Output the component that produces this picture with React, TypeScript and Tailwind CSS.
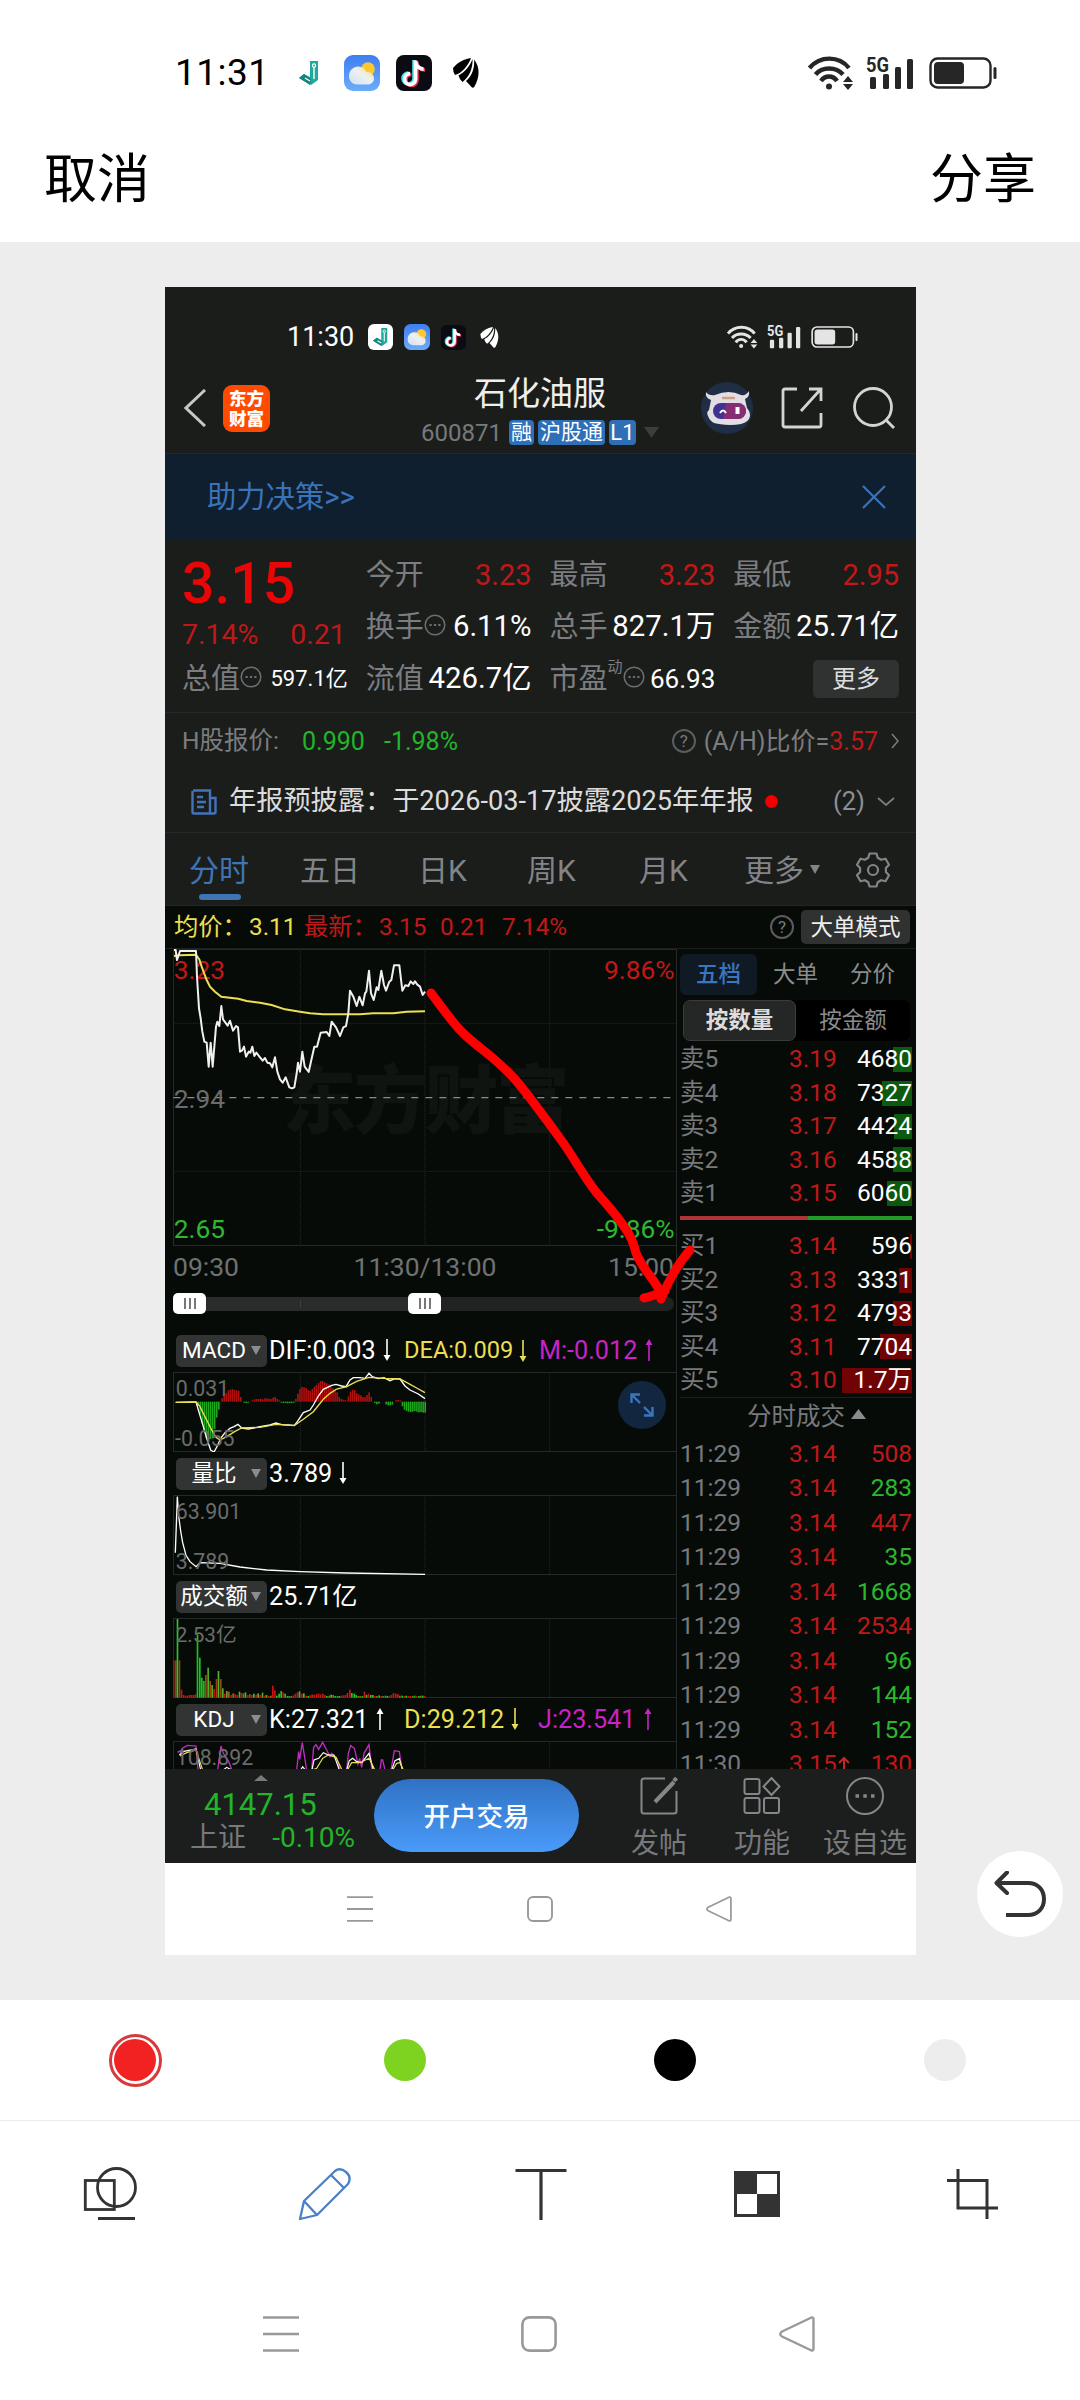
import React from 'react';

interface QuoteRow {
    label: string;
    price: string;
    volume: string;
    bar: number;
}

const SELL_ROWS: QuoteRow[] = [
    { label: '卖5', price: '3.19', volume: '4680', bar: 19 },
    { label: '卖4', price: '3.18', volume: '7327', bar: 30 },
    { label: '卖3', price: '3.17', volume: '4424', bar: 18 },
    { label: '卖2', price: '3.16', volume: '4588', bar: 19 },
    { label: '卖1', price: '3.15', volume: '6060', bar: 25 },
];

const BUY_ROWS: QuoteRow[] = [
    { label: '买1', price: '3.14', volume: '596', bar: 2 },
    { label: '买2', price: '3.13', volume: '3331', bar: 13 },
    { label: '买3', price: '3.12', volume: '4793', bar: 19 },
    { label: '买4', price: '3.11', volume: '7704', bar: 32 },
    { label: '买5', price: '3.10', volume: '1.7万', bar: 70 },
];

const TRADES = [
    { time: '11:29', price: '3.14', volume: '508', up: true },
    { time: '11:29', price: '3.14', volume: '283', up: false },
    { time: '11:29', price: '3.14', volume: '447', up: true },
    { time: '11:29', price: '3.14', volume: '35', up: false },
    { time: '11:29', price: '3.14', volume: '1668', up: false },
    { time: '11:29', price: '3.14', volume: '2534', up: true },
    { time: '11:29', price: '3.14', volume: '96', up: false },
    { time: '11:29', price: '3.14', volume: '144', up: false },
    { time: '11:29', price: '3.14', volume: '152', up: false },
    { time: '11:30', price: '3.15', volume: '130', up: true },
];

// Chart series use a 3x grid so the minute points land on sub-pixels.
const PRICE_LINE = '42,150 47,150 51,180 60,153 108,153 111,230 117,325 122,355 127,395 133,425 140,428 146,500 152,428 158,500 163,440 168,380 172,365 178,378 184,318 189,358 203,377 210,362 219,392 228,378 234,382 240,455 246,452 252,440 258,470 266,455 271,458 277,440 283,468 289,458 300,472 308,482 315,474 322,488 330,490 337,502 345,472 352,515 360,538 368,548 377,532 388,562 396,565 403,562 410,520 414,488 420,515 427,455 434,500 446,516 454,480 463,440 471,440 482,398 500,396 508,408 515,365 528,382 540,408 550,382 558,378 565,340 570,272 580,290 590,318 598,290 608,316 615,280 619,275 627,212 633,280 641,300 650,262 655,270 664,212 672,255 678,272 688,245 694,240 702,196 718,196 727,272 736,256 745,258 752,244 760,252 765,244 772,254 780,260 788,285 795,275';
const AVERAGE_LINE = '42,168 60,166 108,164 118,178 125,200 140,240 150,260 165,275 184,290 235,296 260,303 300,308 335,315 375,328 420,335 450,340 490,343 600,343 640,340 700,340 740,335 795,334';
const DIF_LINE = '47,277 108,276 118,310 130,350 140,385 152,420 162,426 172,408 182,385 195,368 210,355 222,350 234,343 245,354 265,357 300,350 330,345 348,339 365,344 385,345 403,346 412,335 430,308 450,300 460,285 475,258 490,238 515,226 528,223 545,228 558,230 570,210 580,203 600,203 615,205 627,190 637,200 655,206 672,203 690,212 705,206 720,207 735,228 750,240 775,252 795,266';
const DEA_LINE = '47,277 108,276 120,290 140,330 155,360 168,382 180,390 200,380 225,364 245,354 300,352 348,343 403,347 430,328 460,305 490,268 510,250 530,237 560,230 590,214 627,202 670,205 720,207 745,220 770,234 795,248';

const MACD_BARS: { start: number; up: boolean; values: number[] }[] = [
    { start: 112, up: false, values: [12, 38, 65, 92, 108, 118, 112, 110, 82, 48, 24] },
    { start: 184, up: true, values: [10, 22, 26, 34, 36, 38, 35, 34, 33, 14] },
    { start: 250, up: false, values: [3, 4, 3] },
    { start: 275, up: true, values: [4, 7, 8, 8, 9, 7, 10, 10, 9, 8, 12, 14, 8, 4] },
    { start: 362, up: false, values: [3, 4, 4, 5, 4, 4, 3] },
    { start: 405, up: true, values: [8, 24, 38, 44, 43, 41, 35, 32, 38, 45, 50, 56, 62, 62, 58, 55, 52, 45, 40, 35, 28, 14, 8, 6, 5] },
    { start: 563, up: true, values: [16, 30, 36, 35, 26, 22, 19, 14, 13, 20, 28, 14] },
    { start: 642, up: false, values: [4, 8, 6] },
    { start: 676, up: false, values: [8, 11, 11, 9] },
    { start: 706, up: true, values: [4, 5, 4] },
    { start: 725, up: false, values: [14, 24, 28, 30, 31, 30, 28, 30, 32, 31, 33, 33] },
];

const VOLUME_BARS: [number, number, string][] = [
    [39, 112, '#8c1f0b'], [45, 112, '#7a4a10'], [50, 236, '#2fc42b'], [56, 112, '#6d5512'], [62, 24, '#c41512'],
    [68, 8, '#c41512'], [74, 6, '#c41512'], [80, 6, '#c41512'], [86, 8, '#c41512'], [92, 8, '#c41512'], [98, 8, '#c41512'], [104, 10, '#c41512'],
    [110, 190, '#14c81a'], [117, 120, '#14c81a'], [123, 60, '#14c81a'], [129, 50, '#3cae1c'], [135, 68, '#9c4a12'], [142, 90, '#4fae26'],
    [148, 50, '#9c4a12'], [154, 38, '#4fae26'], [160, 26, '#c41512'], [167, 56, '#9c3a12'], [173, 80, '#55b02a'], [180, 56, '#8a4a12'], [186, 28, '#4fae26'],
    [192, 12, '#c41512'], [198, 20, '#6b9b24'], [204, 18, '#8a6a18'], [211, 8, '#c41512'], [217, 13, '#8a6a18'], [223, 11, '#c41512'], [229, 8, '#c41512'],
    [236, 18, '#55b02a'], [242, 14, '#c41512'], [248, 13, '#8a6a18'], [254, 16, '#55b02a'], [261, 8, '#c41512'], [267, 11, '#8a4a12'], [273, 8, '#c41512'],
    [279, 12, '#55b02a'], [286, 9, '#c41512'], [292, 13, '#55b02a'], [298, 8, '#c41512'], [305, 15, '#55b02a'], [311, 6, '#c41512'], [317, 8, '#55b02a'], [324, 5, '#c41512'],
    [330, 6, '#8a6a18'], [336, 36, '#c41512'], [342, 22, '#c41512'], [348, 6, '#55b02a'], [355, 12, '#14c81a'], [361, 20, '#14c81a'], [367, 16, '#c41512'], [373, 12, '#6b9b24'],
    [380, 5, '#14c81a'], [386, 5, '#14c81a'], [392, 5, '#8a6a18'], [398, 7, '#c41512'], [404, 12, '#c41512'], [410, 16, '#c41512'], [416, 19, '#55b02a'], [423, 12, '#c41512'], [429, 13, '#55b02a'],
    [436, 6, '#c41512'], [442, 5, '#14c81a'], [448, 7, '#c41512'], [454, 10, '#c41512'], [460, 8, '#c41512'], [467, 11, '#c41512'], [473, 12, '#c41512'], [479, 10, '#c41512'], [486, 12, '#c41512'],
    [492, 8, '#c41512'], [498, 5, '#14c81a'], [505, 6, '#8a6a18'], [511, 9, '#55b02a'], [517, 8, '#8a6a18'], [523, 5, '#14c81a'], [530, 5, '#14c81a'], [536, 5, '#14c81a'], [542, 6, '#c41512'], [548, 7, '#c41512'],
    [554, 8, '#c41512'], [560, 14, '#c41512'], [567, 24, '#c41512'], [573, 14, '#14c81a'], [580, 12, '#14c81a'], [586, 8, '#14c81a'], [592, 5, '#8a6a18'], [598, 5, '#8a6a18'], [605, 5, '#14c81a'],
    [611, 18, '#c41512'], [617, 8, '#55b02a'], [623, 12, '#c41512'], [630, 8, '#55b02a'], [636, 8, '#14c81a'], [642, 5, '#c41512'], [648, 5, '#8a6a18'], [655, 7, '#14c81a'], [661, 5, '#c41512'], [667, 5, '#8a6a18'],
    [674, 6, '#14c81a'], [680, 5, '#14c81a'], [686, 6, '#c41512'], [692, 8, '#c41512'], [698, 14, '#c41512'], [705, 12, '#c41512'], [711, 11, '#c41512'], [717, 6, '#8a6a18'], [724, 6, '#14c81a'], [730, 5, '#c41512'],
    [736, 6, '#14c81a'], [742, 5, '#c41512'], [748, 5, '#c41512'], [755, 5, '#8a6a18'], [761, 6, '#14c81a'], [767, 5, '#c41512'], [774, 5, '#14c81a'], [780, 6, '#8a6a18'], [786, 6, '#14c81a'], [792, 5, '#c41512'],
];

const WeatherIcon: React.FC<{ className: string }> = ({ className }) => (
    <svg viewBox="0 0 36 36" className={className}>
        <defs>
            <linearGradient id="sky" x1="0" y1="0" x2="0" y2="1">
                <stop offset="0" stopColor="#3f7ef0" />
                <stop offset="1" stopColor="#6cacfa" />
            </linearGradient>
            <linearGradient id="cloud" x1="1" y1="0" x2="0" y2="1">
                <stop offset="0" stopColor="#f5d878" />
                <stop offset=".45" stopColor="#eef1f0" />
                <stop offset="1" stopColor="#cfe0f5" />
            </linearGradient>
        </defs>
        <rect width="36" height="36" rx="9" fill="url(#sky)" />
        <circle cx="24" cy="14" r="6.8" fill="#fdc82f" />
        <path d="M13 29.500a8 8 0 0 1-8-8.500c0-6 5-9.500 9-9.500 5 0 7 3 8.500 5.500 4 0 7.500 2 7.500 6.500 0 3.500-3 6-6 6z" fill="url(#cloud)" />
    </svg>
);

const TikTokIcon: React.FC<{ className: string }> = ({ className }) => (
    <svg viewBox="0 0 36 36" className={className}>
        <rect width="36" height="36" rx="8" fill="#0b0b14" />
        <g fill="none" strokeWidth="3.6">
            <path d="M18 5v18.500a5.500 5.500 0 1 1-5.500-5.500M18 6a8 8 0 0 0 8 7.500" stroke="#42e8e4" transform="translate(0 0)" />
            <path d="M18 5v18.500a5.500 5.500 0 1 1-5.500-5.500M18 6a8 8 0 0 0 8 7.500" stroke="#f5325c" transform="translate(3 1.500)" />
            <path d="M18 5v18.500a5.500 5.500 0 1 1-5.500-5.500M18 6a8 8 0 0 0 8 7.500" stroke="#fff" transform="translate(1.600 .6)" />
        </g>
    </svg>
);

const HookIcon: React.FC<{ className: string }> = ({ className }) => (
    <svg viewBox="0 0 20 24" className={className} fill="none" strokeLinejoin="round">
        <path d="M11 0h8v19l-7 5L0 17l5-4 6 3z" fill="#1fa99f" />
        <path d="M5 13l7 5-1 6L0 17z" fill="#14857e" />
        <circle cx="15" cy="4.500" r="1.600" stroke="#fff" strokeWidth="1.200" />
        <path d="M15 6v12M6 17l5 3" stroke="#fff" strokeWidth="1.400" />
    </svg>
);

const FeatherIcon: React.FC<{ className: string }> = ({ className }) => (
    <svg viewBox="0 0 26 30" className={className} fill="currentColor">
        <path d="M18 0C11 1 5 4 0 10q0 4 2 7C9 15 15 8 18 0z" />
        <path d="M19.500 1C17 8 12 14 5.500 17.500q1 4 4 6.500C16 19 20 11 19.500 1z" />
        <path d="M21 1.500C22 11 18 19 13 23l6 6.500q2 .5 2.500-1C26.500 20 27.500 9 21 1.500z" />
    </svg>
);

const WifiIcon: React.FC<{ className: string }> = ({ className }) => (
    <svg viewBox="0 0 46 34" className={className} fill="none" stroke="currentColor" strokeWidth="4.4">
        <path d="M1.500 12C12-.5 31-.5 41 12" />
        <path d="M7.500 18.500C14 10.500 28 10.500 35 18.500" />
        <path d="M13 25c4-6 12-6 16 0" />
        <circle cx="21" cy="30.500" r="3" fill="currentColor" stroke="none" />
        <path d="M40 20l5 6H35zM40 34l5-6H35z" fill="currentColor" stroke="none" />
    </svg>
);

const SignalIcon: React.FC<{ className: string }> = ({ className }) => (
    <svg viewBox="0 0 48 34" className={`overflow-visible ${className}`} fill="currentColor">
        <text x="0" y="15.500" fontSize="20" fontWeight="700" textLength="23" lengthAdjust="spacingAndGlyphs">5G</text>
        <rect x="4" y="21" width="6" height="12" rx="1.5" />
        <rect x="17" y="18" width="6" height="15" rx="1.5" />
        <rect x="29" y="11" width="6" height="22" rx="1.5" />
        <rect x="41" y="3" width="6" height="30" rx="1.5" />
    </svg>
);

const BatteryIcon: React.FC<{ className: string }> = ({ className }) => (
    <svg viewBox="0 0 68 32" className={className}>
        <rect x="1.5" y="1.5" width="60" height="29" rx="7" fill="none" stroke="currentColor" strokeWidth="2.4" />
        <rect x="5" y="5" width="30" height="22" rx="4" fill="currentColor" />
        <rect x="64.5" y="10" width="3" height="12" rx="1.5" fill="currentColor" />
    </svg>
);

const DotsIcon: React.FC = () => (
    <svg viewBox="0 0 22 22" className="h-[22px] w-[22px] shrink-0 fill-none stroke-[#6c6e71]" strokeWidth="1.5">
        <circle cx="11" cy="11" r="9.8" />
        <path d="M5.500 11h2.200M9.900 11h2.200M14.300 11h2.200" strokeWidth="2" />
    </svg>
);

const HelpIcon: React.FC = () => (
    <span className="flex h-[24px] w-[24px] items-center justify-center rounded-full border-2 border-[#5a5c5e] text-[17px] leading-none text-[#77797b]">?</span>
);

const ArrowIcon: React.FC<{ up?: boolean }> = ({ up }) => (
    <svg viewBox="0 0 8 22" className={`h-[22px] w-[8px] shrink-0 ${up ? 'rotate-180' : ''}`}>
        <path d="M4 0v18" stroke="currentColor" strokeWidth="1.6" />
        <path d="M.5 16h7L4 22z" fill="currentColor" />
    </svg>
);

const SystemNav: React.FC<{ className: string; iconClass: string }> = ({ className, iconClass }) => (
    <div className={`flex items-center text-[#999] ${className}`}>
        <svg viewBox="0 0 36 36" className={iconClass} fill="none" stroke="currentColor" strokeWidth="2.6">
            <path d="M0 1.500h36M0 18h36M0 34.500h36" />
        </svg>
        <svg viewBox="0 0 36 36" className={iconClass} fill="none" stroke="currentColor" strokeWidth="2.6">
            <rect x="1.4" y="1.4" width="33.2" height="33.2" rx="7" />
        </svg>
        <svg viewBox="0 0 36 36" className={iconClass} fill="none" stroke="currentColor" strokeWidth="2.4" strokeLinejoin="round">
            <path d="M32.500 1.500L3 15.500q-3.500 2.500 0 5L32.500 34.500q2 .5 2-2V3.500q0-2.500-2-2z" />
        </svg>
    </div>
);

const OuterHeader: React.FC = () => (
    <header className="h-[242px] bg-white text-black">
        <div className="flex h-[145px] items-center pl-[175px] pr-[83px]">
            <span className="w-[124px] text-[37px] leading-none tracking-[.5px]">11:31</span>
            <HookIcon className="h-[24px] w-[20px]" />
            <WeatherIcon className="ml-[25px] h-[36px] w-[36px]" />
            <TikTokIcon className="ml-[16px] h-[36px] w-[36px]" />
            <FeatherIcon className="ml-[21px] h-[30px] w-[26px]" />
            <div className="ml-auto flex items-center text-[#262626]">
                <WifiIcon className="h-[34px] w-[46px]" />
                <SignalIcon className="ml-[12px] h-[34px] w-[48px]" />
                <BatteryIcon className="ml-[15px] h-[32px] w-[68px]" />
            </div>
        </div>
        <div className="flex h-[71px] items-center justify-between px-[44px] text-[53px] leading-none">
            <span>取消</span>
            <span>分享</span>
        </div>
    </header>
);

const InnerStatusBar: React.FC = () => (
    <div className="flex h-[100px] items-center pl-[122px] pr-[58px] text-white">
        <span className="w-[81px] text-[27px] leading-none">11:30</span>
        <span className="flex h-[26px] w-[25px] items-center justify-center rounded-[6px] bg-white">
            <HookIcon className="h-[18px] w-[15px]" />
        </span>
        <WeatherIcon className="ml-[11px] h-[26px] w-[26px]" />
        <TikTokIcon className="ml-[11px] h-[25px] w-[25px]" />
        <FeatherIcon className="ml-[14px] h-[21px] w-[19px]" />
        <div className="ml-auto flex items-center text-[#e4e4e4]">
            <WifiIcon className="h-[24px] w-[31px]" />
            <SignalIcon className="ml-[9px] h-[24px] w-[34px]" />
            <BatteryIcon className="ml-[10px] h-[22px] w-[47px]" />
        </div>
    </div>
);

const StockHeader: React.FC = () => (
    <div className="flex h-[67px] items-start border-b border-[#262827]">
        <svg viewBox="0 0 22 38" className="ml-[19px] mt-[2px] h-[38px] w-[22px] fill-none stroke-[#c8c8c8]" strokeWidth="3">
            <path d="M21 1L2 19l19 18" />
        </svg>
        <div className="-mt-[2px] ml-[17px] flex h-[47px] w-[47px] flex-col items-center justify-center rounded-[9px] bg-[#ff4a00] text-[17.5px] font-black leading-[20px] text-white">
            <span>东方</span>
            <span>财富</span>
        </div>
        <div className="-mt-[11px] ml-[146px] flex w-[248px] flex-col items-center">
            <div className="text-[33px] leading-[36px] text-[#eee]">石化油服</div>
            <div className="mt-[8px] flex h-[25px] w-full items-center justify-center text-[21px] leading-none">
                <span className="text-[24px] text-[#77797c]">600871</span>
                <span className="ml-[7px] flex h-[25px] w-[25px] items-center justify-center rounded-[4px] bg-[#2f6fb8] text-white">融</span>
                <span className="ml-[4px] flex h-[25px] w-[67px] items-center justify-center rounded-[4px] bg-[#2f6fb8] text-white">沪股通</span>
                <span className="ml-[4px] flex h-[25px] w-[27px] items-center justify-center rounded-[4px] bg-[#2f6fb8] text-[22px] text-white">L1</span>
                <svg viewBox="0 0 15 11" className="ml-[8px] h-[11px] w-[15px] shrink-0 fill-[#3c3e3e]"><path d="M0 0h15L7.500 11z" /></svg>
            </div>
        </div>
        <svg viewBox="0 0 52 52" className="-mt-[5px] ml-[37px] h-[52px] w-[52px]">
            <circle cx="26" cy="26" r="26" fill="#1f2d45" />
            <path d="M5 10q-1 6 5 8l-2 10q-3 2-1 6 2 7 11 8 12 2 22 0 8-2 9-8 0-5-3-8l-2-9q5-2 4-8-3 5-8 4Q28 7 14 13 8 14 5 10z" fill="#e2dee4" />
            <rect x="12" y="21" width="33" height="16" rx="8" fill="#3f3290" />
            <path d="M25 21h12a8 8 0 0 1 0 16H22z" fill="#a02c6a" opacity=".75" />
            <path d="M19 31q3-5 6 0" stroke="#fff" strokeWidth="2" fill="none" />
            <path d="M36.500 25v7" stroke="#fff" strokeWidth="4" />
            <path d="M21 16h13" stroke="#c9a184" strokeWidth="2.5" />
        </svg>
        <svg viewBox="0 0 42 42" className="ml-[28px] h-[42px] w-[42px] fill-none stroke-[#d4d4d4]" strokeWidth="2.8">
            <path d="M16 2H4q-2 0-2 2v34q0 2 2 2h34q2 0 2-2V26" />
            <path d="M28 2h12v12M39 3L20 24" />
        </svg>
        <svg viewBox="0 0 42 42" className="ml-[30px] h-[42px] w-[42px] fill-none stroke-[#d4d4d4]" strokeWidth="2.8">
            <circle cx="20" cy="20" r="18.5" />
            <path d="M33 33l8 8" />
        </svg>
    </div>
);

const Stat: React.FC<{ label: string; value: string; valueClass: string; dots?: boolean; sup?: string }> = ({ label, value, valueClass, dots, sup }) => (
    <div className="flex items-center justify-between whitespace-nowrap leading-none">
        <span className="flex items-center text-[29px] text-[#7b7d80]">
            {label}
            {sup && <span className="-mt-[24px] text-[15px]">{sup}</span>}
            {dots && <span className="-mt-[4px]"><DotsIcon /></span>}
        </span>
        <span className={valueClass}>{value}</span>
    </div>
);

const StatsPanel: React.FC = () => (
    <div className="grid h-[174px] grid-cols-4 grid-rows-[52px_52px_52px] gap-x-[18px] border-b border-[#262827] px-[17px] pt-[10px]">
        <div className="row-span-2">
            <div className="flex h-[68px] items-center text-[57px] font-medium leading-none text-[#e80606]">3.15</div>
            <div className="flex h-[37px] items-center justify-between pr-[2px] text-[28.5px] leading-none text-[#c01818]">
                <span>7.14%</span>
                <span>0.21</span>
            </div>
        </div>
        <Stat label="今开" value="3.23" valueClass="text-[29px] text-[#c01818]" />
        <Stat label="最高" value="3.23" valueClass="text-[29px] text-[#c01818]" />
        <Stat label="最低" value="2.95" valueClass="text-[29px] text-[#c01818]" />
        <Stat label="换手" value="6.11%" valueClass="text-[29.3px] text-white" dots />
        <Stat label="总手" value="827.1万" valueClass="text-[29.3px] text-white" />
        <Stat label="金额" value="25.71亿" valueClass="text-[29.3px] text-white" />
        <Stat label="总值" value="597.1亿" valueClass="text-[22px] text-white" dots />
        <Stat label="流值" value="426.7亿" valueClass="text-[29.3px] text-white" />
        <Stat label="市盈" value="66.93" valueClass="text-[26px] text-white" sup="动" dots />
        <div className="flex items-center justify-end">
            <button className="h-[38px] w-[86px] rounded-[5px] bg-[#303131] text-[24px] leading-none text-[#ddd]">更多</button>
        </div>
    </div>
);

const InfoRows: React.FC = () => (
    <div className="h-[120px] border-b border-[#262827]">
        <div className="flex h-[56px] items-center px-[17px] text-[25px] leading-none text-[#7b7d80]">
            <span className="w-[120px] text-[24.5px]">H股报价:</span>
            <span className="w-[82px] text-[#22b52a]">0.990</span>
            <span className="text-[#22b52a]">-1.98%</span>
            <span className="ml-auto mr-[8px]"><HelpIcon /></span>
            <span>(A/H)比价=</span>
            <span className="text-[#c01818]">3.57</span>
            <svg viewBox="0 0 8 16" className="ml-[13px] h-[16px] w-[8px] fill-none stroke-[#7b7d80]" strokeWidth="1.5"><path d="M1 1l6 7-6 7" /></svg>
        </div>
        <div className="flex h-[65px] items-center pl-[26px] pr-[21px] text-[27.2px] leading-none text-[#dcdcdc]">
            <svg viewBox="0 0 26 26" className="h-[26px] w-[26px] fill-none stroke-[#4273bd]" strokeWidth="2.4">
                <path d="M2 1.500h17v23H3q-1.500 0-1.500-1.500V2M19 9h5.500v14q0 1.500-1.500 1.500h-4M6 8h6M6 13h9M6 18h7" />
            </svg>
            <span className="ml-[12px]">年报预披露：于2026-03-17披露2025年年报</span>
            <span className="ml-[11px] h-[13px] w-[13px] rounded-full bg-[#f00000]" />
            <span className="ml-auto text-[25.5px] text-[#8d8f92]">(2)</span>
            <svg viewBox="0 0 18 9" className="ml-[12px] h-[9px] w-[18px] fill-none stroke-[#7b7d80]" strokeWidth="1.8"><path d="M1 1l8 7 8-7" /></svg>
        </div>
    </div>
);

const PeriodTabs: React.FC = () => (
    <div className="flex h-[73px] items-start border-b border-[#232524] pl-[24px] pt-[21px] text-[30px] leading-[34px] text-[#828487]">
        <div className="flex w-[111px] flex-col items-start text-[#3f74b5]">
            分时
            <span className="ml-[10px] mt-[6px] h-[6px] w-[42px] rounded-full bg-[#3f74b5]" />
        </div>
        <span className="w-[118px]">五日</span>
        <span className="w-[109px]">日K</span>
        <span className="w-[112px]">周K</span>
        <span className="w-[105px]">月K</span>
        <span>更多</span>
        <svg viewBox="0 0 10 9" className="ml-[6px] mt-[11px] h-[9px] w-[10px] fill-[#828487]"><path d="M0 0h10L5 9z" /></svg>
        <svg viewBox="0 0 36 36" className="-mt-[2px] ml-[35px] h-[36px] w-[36px] fill-none stroke-[#828487]" strokeWidth="2.2" strokeLinejoin="round">
            <path d="M14.500 1.500h7l1.200 4.300 3.500 2 4.300-1.100 3.500 6-3.100 3.200v4.200l3.100 3.200-3.500 6-4.300-1.100-3.500 2-1.200 4.300h-7l-1.200-4.300-3.500-2-4.300 1.100-3.500-6 3.100-3.200v-4.200L2 12.700l3.500-6 4.300 1.100 3.500-2z" />
            <circle cx="18" cy="18" r="5" />
        </svg>
    </div>
);

const GridLines: React.FC<{ top: number; height: number }> = ({ top, height }) => (
    <g fill="none" stroke="#252928" strokeWidth="3">
        <path d={`M40.500 ${top + 1.5}H1548M40.500 ${top}v${height}M40.500 ${top + height - 1.5}H1548`} />
        <path d={`M421 ${top}v${height}M795 ${top}v${height}M1169 ${top}v${height}`} strokeDasharray="3 3" />
    </g>
);

const PriceChart: React.FC = () => (
    <svg viewBox="39 147 1509 891" className="block h-[297px] w-[503px]" fill="none">
        <GridLines top={147} height={891} />
        <path d="M40 370H1548M40 814H1548" stroke="#252928" strokeWidth="3" strokeDasharray="3 3" />
        <text x="368" y="680" fontSize="220" fontWeight="900" textLength="860" fill="#101411">东方财富</text>
        <path d="M40 593H1548" stroke="#8a8a8a" strokeWidth="4" strokeDasharray="21 21" />
        <g fontSize="79">
            <text x="41" y="236" fill="#c01818">3.23</text>
            <text x="1544" y="236" fill="#c01818" textAnchor="end">9.86%</text>
            <text x="41" y="624" fill="#6a6c6c">2.94</text>
            <text x="41" y="1014" fill="#2fb82f">2.65</text>
            <text x="1544" y="1014" fill="#2fb82f" textAnchor="end">-9.86%</text>
        </g>
        <polyline points={AVERAGE_LINE} stroke="#ecdf50" strokeWidth="6" />
        <polyline points={PRICE_LINE} stroke="#f0f0f0" strokeWidth="6" strokeLinejoin="round" />
    </svg>
);

const IndicatorHeader: React.FC<{ name: string; children: React.ReactNode }> = ({ name, children }) => (
    <div className="flex h-[43px] items-center pl-[3px] text-[25.2px] leading-none text-white">
        <span className="flex h-[32px] w-[91px] items-center justify-between rounded-[5px] bg-[#323333] pl-[7px] pr-[6px]">
            <span className="flex w-[62px] justify-center whitespace-nowrap text-[22.5px]">{name}</span>
            <svg viewBox="0 0 10 9" className="h-[9px] w-[10px] shrink-0 fill-[#8a8c8e]"><path d="M0 0h10L5 9z" /></svg>
        </span>
        {children}
    </div>
);

const Reading: React.FC<{ text: string; up?: boolean; className: string }> = ({ text, up, className }) => (
    <span className={`flex items-center justify-between whitespace-nowrap ${className}`}>
        {text}
        <ArrowIcon up={up} />
    </span>
);

const SliderHandle: React.FC = () => (
    <span className="z-10 flex h-[21px] w-[33px] items-center justify-center gap-[3px] rounded-[5px] bg-white">
        <i className="h-[11px] w-[2px] bg-[#777]" />
        <i className="h-[11px] w-[2px] bg-[#777]" />
        <i className="h-[11px] w-[2px] bg-[#777]" />
    </span>
);

const ChartColumn: React.FC = () => (
    <div className="w-[512px] shrink-0 border-r border-[#252928] pl-[8px]">
        <PriceChart />
        <div className="flex h-[43px] items-center justify-between pr-[2px] text-[26.5px] leading-none text-[#707272]">
            <span className="w-[178px]">09:30</span>
            <span>11:30/13:00</span>
            <span className="w-[175px] text-right">15:00</span>
        </div>
        <div className="flex h-[29px] items-center">
            <SliderHandle />
            <span className="h-[14px] w-[202px] bg-[#2a2c2b] pl-[94px] pt-[3px]"><i className="block h-[8px] w-px bg-[#3d3f3e]" /></span>
            <SliderHandle />
            <span className="h-[14px] w-[233px] rounded-r-full bg-[#212322]" />
        </div>
        <div className="h-[11px]" />

        <IndicatorHeader name="MACD">
            <Reading text="DIF:0.003" className="ml-[2px] w-[122px]" />
            <Reading text="DEA:0.009" className="ml-[13px] w-[123px] text-[23.6px] text-[#ecdf50]" />
            <Reading text="M:-0.012" up className="ml-[12px] w-[114px] text-[#c822c8]" />
        </IndicatorHeader>
        <div className="relative">
            <svg viewBox="39 186 1509 240" className="block h-[80px] w-[503px]" fill="none">
                <GridLines top={186} height={240} />
                {MACD_BARS.map(group => group.values.map((value, index) => (
                    <rect
                        key={group.start + index * 6.2}
                        x={group.start + index * 6.2}
                        y={group.up ? 275 - value : 275}
                        width="4.8"
                        height={value}
                        fill={group.up ? '#b0100e' : '#1fa81d'}
                    />
                )))}
                <polyline points={DIF_LINE} stroke="#fff" strokeWidth="4" />
                <polyline points={DEA_LINE} stroke="#ecdf50" strokeWidth="4" />
                <g fontSize="64" fill="#6a6c6c">
                    <text x="47" y="257">0.031</text>
                    <text x="45" y="409">-0.055</text>
                </g>
            </svg>
            <span className="absolute right-[10px] top-[9px] flex h-[48px] w-[48px] items-center justify-center rounded-full bg-[#132640]">
                <svg viewBox="0 0 24 24" className="h-[24px] w-[24px] fill-none stroke-[#3a76bd]" strokeWidth="2.4">
                    <path d="M1.500 10V1.500H10M2 2l8 8M22.500 14v8.500H14M22 22l-8-8" />
                </svg>
            </span>
        </div>

        <IndicatorHeader name="量比">
            <Reading text="3.789" className="ml-[2px] w-[78px]" />
        </IndicatorHeader>
        <svg viewBox="39 -3 1509 240" className="block h-[80px] w-[503px]" fill="none">
            <GridLines top={-3} height={240} />
            <polyline points="46,170 52,2 56,60 62,105 68,140 78,178 90,197 108,212 120,200 180,202 240,213 320,222 420,227 560,231 795,235" stroke="#fff" strokeWidth="4" />
            <g fontSize="64" fill="#6a6c6c">
                <text x="47" y="68">63.901</text>
                <text x="47" y="218">3.789</text>
            </g>
        </svg>

        <IndicatorHeader name="成交额">
            <span className="ml-[2px]">25.71亿</span>
        </IndicatorHeader>
        <svg viewBox="39 234 1509 240" className="block h-[80px] w-[503px]" fill="none">
            <GridLines top={234} height={240} />
            {VOLUME_BARS.map(([x, height, color]) => (
                <rect key={x} x={x} y={473 - height} width={5} height={height} fill={color} />
            ))}
            <text x="47" y="306" fontSize="62" fill="#6a6c6c">2.53亿</text>
        </svg>

        <IndicatorHeader name="KDJ">
            <Reading text="K:27.321" up className="ml-[2px] w-[115px]" />
            <Reading text="D:29.212" className="ml-[20px] w-[115px] text-[#ecdf50]" />
            <Reading text="J:23.541" up className="ml-[19px] w-[114px] text-[#c822c8]" />
        </IndicatorHeader>
        <svg viewBox="39 603 1509 240" className="block h-[80px] w-[503px]" fill="none">
            <GridLines top={603} height={240} />
            <path d="M60 645L66 625 82 616 108 618 114 690M173 690L183 618 190 640 206 665 216 690M410 690L416 635 419 658 427 608 440 690M455 690L461 622 468 614 476 628 488 607 500 630 510 650 515 640 530 655 540 690M560 690L565 640 572 617 583 625 594 672 599 655 605 682 612 640 627 614 636 690M660 690L664 660 668 660 675 690M693 690L703 632 718 635 726 690" stroke="#c02bc0" strokeWidth="4" />
            <path d="M58 645L72 634 108 627 122 690M190 690L200 682 215 690M422 690L428 680 436 690M456 690L462 660 476 655 490 638 505 645 522 645 538 690M560 690L568 662 578 655 590 665 605 668 627 640 640 690M695 690L705 662 718 656 728 690" stroke="#fff" strokeWidth="3.5" />
            <path d="M60 648L80 638 108 630 128 690M456 690L470 685 488 655 505 645 528 652 546 690M562 690L575 668 600 668 627 655 645 690M698 690L710 670 720 668 730 690" stroke="#ecdf50" strokeWidth="3.5" />
            <text x="47" y="674" fontSize="64" fill="#6a6c6c">108.892</text>
        </svg>
    </div>
);

const QuoteLine: React.FC<{ row: QuoteRow; barClass: string }> = ({ row, barClass }) => (
    <div className="flex h-[33.4px] items-center">
        <span className="w-[109px] text-[#77797c]">{row.label}</span>
        <span className="text-[#c01818]">{row.price}</span>
        <span className="relative ml-auto flex h-[25px] items-center text-white">
            <i className={`absolute right-0 top-0 h-[25px] ${barClass}`} style={{ width: row.bar }} />
            <span className="relative">{row.volume}</span>
        </span>
    </div>
);

const OrderBook: React.FC = () => (
    <div className="w-[239px] pl-[3px] pr-[4px] text-[24.5px] leading-none">
        <div className="flex h-[46px] items-end text-[22.5px] text-[#8a8c8e]">
            <span className="flex h-[41px] w-[77px] items-center justify-center rounded-[6px] bg-[#101a24] font-medium text-[#3a76bd]">五档</span>
            <span className="flex h-[41px] w-[77px] items-center justify-center">大单</span>
            <span className="flex h-[41px] w-[77px] items-center justify-center">分价</span>
        </div>
        <div className="ml-[3px] mt-[5px] flex h-[41px] w-[227px] rounded-[7px] bg-black text-[22.5px]">
            <span className="flex w-[113px] items-center justify-center rounded-[7px] border border-[#3a3b3b] bg-[#252726] font-bold text-[#dcdcdc]">按数量</span>
            <span className="flex flex-1 items-center justify-center text-[#8a8c8e]">按金额</span>
        </div>
        <div className="pt-[2px]">
            {SELL_ROWS.map(row => <QuoteLine key={row.label} row={row} barClass="bg-[#0c5a10]" />)}
        </div>
        <div className="mt-[6px] flex h-[4px]">
            <span className="w-[128px] bg-[#b03436]" />
            <span className="flex-1 bg-[#239a28]" />
        </div>
        <div className="pt-[10px]">
            {BUY_ROWS.map(row => <QuoteLine key={row.label} row={row} barClass="bg-[#700405]" />)}
        </div>
        <div className="flex h-[40px] items-center border-t border-[#1c1f1e] pl-[67px] text-[24.5px] text-[#77797c]">
            分时成交
            <svg viewBox="0 0 15 10" className="mb-[6px] ml-[6px] h-[10px] w-[15px] fill-[#8a8c8e]"><path d="M0 10h15L7.500 0z" /></svg>
        </div>
        <div>
            {TRADES.map((trade, index) => (
                <div key={index} className="flex h-[34.5px] items-center">
                    <span className="w-[109px] text-[#77797c]">{trade.time}</span>
                    <span className="text-[#c01818]">{trade.price}</span>
                    {trade.price === '3.15' && (
                        <svg viewBox="0 0 12 18" className="ml-[1px] h-[18px] w-[12px] fill-none stroke-[#c4281e]" strokeWidth="2"><path d="M6 18V2M1 7l5-5 5 5" /></svg>
                    )}
                    <span className={trade.up ? 'ml-auto text-[#c01818]' : 'ml-auto text-[#2cb82c]'}>{trade.volume}</span>
                </div>
            ))}
        </div>
    </div>
);

const MarketBody: React.FC = () => (
    <div className="h-[863px] overflow-hidden bg-[#070b08]">
        <div className="flex h-[43px] items-center border-b border-[#1c1f1e] pl-[9px] pr-[6px] text-[24.3px] leading-none text-[#c01818]">
            <span className="w-[75px] whitespace-nowrap text-[#ecdf50]">均价：</span>
            <span className="w-[55px] text-[#ecdf50]">3.11</span>
            <span className="w-[75px] whitespace-nowrap">最新：</span>
            <span className="w-[61px]">3.15</span>
            <span className="w-[62px]">0.21</span>
            <span>7.14%</span>
            <span className="ml-auto"><HelpIcon /></span>
            <button className="ml-[7px] h-[34px] w-[109px] rounded-[5px] bg-[#303131] text-[22.5px] leading-none text-[#eee]">大单模式</button>
        </div>
        <div className="flex">
            <ChartColumn />
            <OrderBook />
        </div>
    </div>
);

const BottomAction: React.FC<{ label: string; className: string; children: React.ReactNode }> = ({ label, className, children }) => (
    <div className={`flex flex-col items-center pt-[8px] ${className}`}>
        <svg viewBox="0 0 38 38" className="h-[38px] w-[38px] fill-none stroke-[#848689]" strokeWidth="2">{children}</svg>
        <span className="mt-[15px] whitespace-nowrap text-[28px] leading-none text-[#77797c]">{label}</span>
    </div>
);

const TradeBar: React.FC = () => (
    <div className="flex h-[94px] bg-[#1c1e1d] pl-[25px] leading-none">
        <div className="w-[165px] text-[28px]">
            <svg viewBox="0 0 14 6" className="ml-[64px] mt-[6px] h-[6px] w-[14px] fill-[#77797c]"><path d="M0 6h14L7 0z" /></svg>
            <div className="ml-[14px] mt-[8px] text-[31px] text-[#22b52a]">4147.15</div>
            <div className="mt-[4px] flex justify-between">
                <span className="text-[#77797c]">上证</span>
                <span className="text-[#22b52a]">-0.10%</span>
            </div>
        </div>
        <button className="ml-[19px] mt-[10px] h-[73px] w-[205px] rounded-full bg-linear-to-b from-[#2f72c4] to-[#4a9bfa] pt-[3px] text-[26.5px] font-medium leading-none text-white">开户交易</button>
        <BottomAction label="发帖" className="ml-[41px] w-[78px]">
            <path d="M25 1.500H4q-2.500 0-2.500 2.500v30q0 2.500 2.500 2.500h30q2.500 0 2.500-2.500V14" />
            <path d="M34 5L15 25M36.500 1l-2.500 3" strokeWidth="4" />
        </BottomAction>
        <BottomAction label="功能" className="ml-[25px] w-[78px]">
            <rect x="1.5" y="2" width="15" height="15" rx="2" />
            <rect x="1.5" y="21" width="15" height="15" rx="2" />
            <rect x="21" y="21" width="15" height="15" rx="2" />
            <path d="M28.500 1l8 8.500-8 8.500-8-8.500z" />
        </BottomAction>
        <BottomAction label="设自选" className="ml-[19px] w-[90px]">
            <circle cx="19" cy="19" r="18" />
            <path d="M9.500 19h3.500M17.300 19h3.500M25 19h3.500" strokeWidth="3.5" />
        </BottomAction>
    </div>
);

const StockCapture: React.FC = () => (
    <div className="relative w-[751px] bg-[#1b1d1b]">
        <InnerStatusBar />
        <StockHeader />
        <div className="flex h-[85px] items-center justify-between bg-[#101f2f] pl-[42px] pr-[30px] pt-[3px] text-[29.3px] leading-none text-[#3a74b8]">
            <span>助力决策&gt;&gt;</span>
            <svg viewBox="0 0 24 24" className="-mt-[3px] h-[24px] w-[24px] fill-none stroke-[#3a74b8]" strokeWidth="2.2"><path d="M1 1l22 22M23 1L1 23" /></svg>
        </div>
        <StatsPanel />
        <InfoRows />
        <PeriodTabs />
        <MarketBody />
        <TradeBar />
        <SystemNav className="h-[92px] justify-between bg-white pl-[182px] pr-[184px]" iconClass="h-[26px] w-[26px]" />

        {/* hand-drawn arrow over the chart */}
        <svg viewBox="0 0 751 1668" className="absolute left-0 top-0 h-[1668px] w-[751px] fill-none stroke-[#ff0000]" strokeWidth="9" strokeLinecap="round" strokeLinejoin="round">
            <path d="M266 706C276 719 289 738 298 746C308 756 320 764 330 773C346 787 352 794 365 811C381 832 389 843 399 857C410 873 420 891 431 905C443 919 450 926 458 938C466 949 468 955 471 966C478 983 488 990 496 1006" />
            <path d="M479 1011C488 1009 495 1006 500 1004" />
            <path d="M496 1012C503 995 511 979 525 963" />
        </svg>
    </div>
);

const SWATCHES = ['bg-[#f22222]', 'bg-[#7ed321]', 'bg-black', 'bg-[#ededed]'];

const EditorToolbar: React.FC = () => (
    <footer className="h-[400px] bg-white">
        <div className="flex h-[121px] items-center border-b border-[#ebebeb]">
            {SWATCHES.map((color, index) => (
                <div key={color} className="flex w-[270px] items-center justify-center">
                    {index === 0 ? (
                        <span className="flex h-[53px] w-[53px] items-center justify-center rounded-full border-[3px] border-[#d63a3a]">
                            <i className={`h-[42px] w-[42px] rounded-full ${color}`} />
                        </span>
                    ) : (
                        <span className={`h-[42px] w-[42px] rounded-full ${color}`} />
                    )}
                </div>
            ))}
        </div>
        <div className="grid h-[146px] grid-cols-5 items-center justify-items-center pl-[2px] text-[#333]">
            <svg viewBox="0 0 54 54" className="h-[54px] w-[54px] fill-none stroke-current" strokeWidth="2.8">
                <rect x="2.3" y="13.5" width="29" height="29" />
                <circle cx="33.5" cy="20.5" r="19" />
                <path d="M15 51.500h37" />
            </svg>
            <svg viewBox="0 0 54 54" className="h-[54px] w-[54px] fill-none stroke-[#4a80c8]" strokeWidth="2.3" strokeLinejoin="round">
                <path d="M2 52l4-18L37 4q5-4 11 1t2 12L19 48zM6 34l13 14M33 8l13 13" />
            </svg>
            <svg viewBox="0 0 54 54" className="h-[54px] w-[54px] fill-none stroke-current" strokeWidth="3.2">
                <path d="M1.500 3.500h51M27 3.500V53" />
            </svg>
            <svg viewBox="0 0 46 46" className="h-[46px] w-[46px] fill-current">
                <path d="M0 0h46v46H0zM23 3v20h20V3zM3 23v20h20V23z" fillRule="evenodd" />
            </svg>
            <svg viewBox="0 0 52 52" className="h-[52px] w-[52px] fill-none stroke-current" strokeWidth="3">
                <path d="M12 1v39h40M1 12.500h40V51" />
            </svg>
        </div>
        <SystemNav className="h-[134px] justify-between pl-[263px] pr-[265px]" iconClass="h-[36px] w-[36px]" />
    </footer>
);

export default function App() {
    return (
        <div className="h-[2400px] w-[1080px] overflow-hidden bg-[#ededed] font-['Roboto','Noto_Sans_CJK_SC',sans-serif]">
            <OuterHeader />
            <main className="relative h-[1758px] pl-[165px] pt-[45px]">
                <StockCapture />
                <button className="absolute right-[17px] top-[1609px] flex h-[86px] w-[86px] items-center justify-center rounded-full bg-white">
                    <svg viewBox="0 0 52 46" className="h-[46px] w-[52px] fill-none stroke-[#333]" strokeWidth="4">
                        <path d="M13 1.500L2.500 12 13 22" strokeLinecap="round" strokeLinejoin="round" />
                        <path d="M3 12h31c10 0 16 7 16 16s-6 16-16 16H12" />
                    </svg>
                </button>
            </main>
            <EditorToolbar />
        </div>
    );
}
